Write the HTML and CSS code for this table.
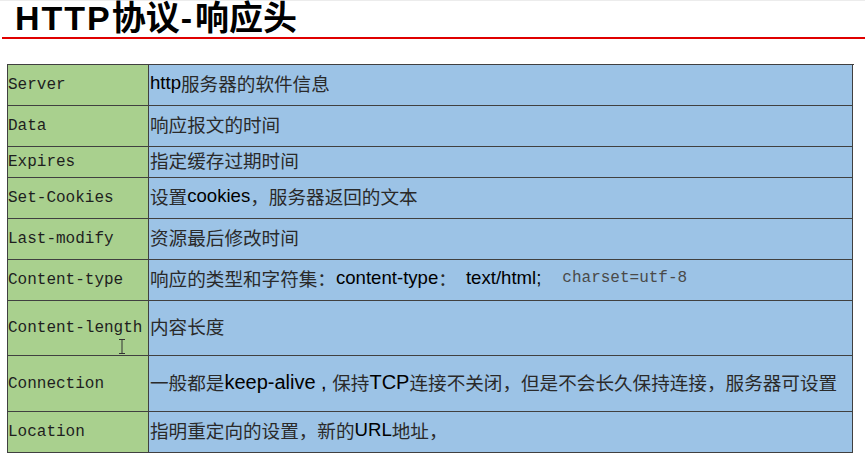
FILE: index.html
```html
<!DOCTYPE html>
<html lang="zh-CN">
<head>
<meta charset="utf-8">
<title>HTTP协议-响应头</title>
<link rel="stylesheet" href="styles.css">
</head>
<body>
<div class="slide">
  <header class="head">
    <h1 class="title"><span class="lat">HTTP</span>协议<span class="dash">-</span>响应头</h1>
  </header>
  <div class="table">
    <div class="k r41">Server</div>
    <div class="v r41"><span class="lat">http</span>服务器的软件信息</div>

    <div class="k r41">Data</div>
    <div class="v r41">响应报文的时间</div>

    <div class="k r31">Expires</div>
    <div class="v r31">指定缓存过期时间</div>

    <div class="k r41">Set-Cookies</div>
    <div class="v r41">设置<span class="lat">cookies</span>，服务器返回的文本</div>

    <div class="k r41">Last-modify</div>
    <div class="v r41">资源最后修改时间</div>

    <div class="k r41">Content-type</div>
    <div class="v r41">响应的类型和字符集：<span class="lat">content-type</span>：<span class="lat gap1">text/html;</span><span class="mono">charset=utf-8</span></div>

    <div class="k r55 cursor-cell">Content-length
      <svg class="ibeam" width="8" height="15" viewBox="0 0 8 15"><path d="M1 0.5h6M4 0.5v14M1 14.5h6" stroke="#333" stroke-width="1" fill="none"/></svg>
    </div>
    <div class="v r55">内容长度</div>

    <div class="k r56">Connection</div>
    <div class="v r56">一般都是<span class="lat big">keep-alive&nbsp;,&nbsp;</span>保持<span class="lat big">TCP</span>连接不关闭，但是不会长久保持连接，服务器可设置</div>

    <div class="k r41">Location</div>
    <div class="v r41">指明重定向的设置，新的<span class="lat">URL</span>地址，</div>
  </div>
</div>
</body>
</html>
```
FILE: styles.css
```css
html, body {
  margin: 0;
  padding: 0;
  background: #ffffff;
}
.slide {
  width: 865px;
  height: 460px;
  border-top: 1px solid #ececec;
  box-sizing: border-box;
}
.head {
  margin-left: 2px;
  height: 36px;
  border-bottom: 2px solid #e00000;
  display: flex;
  align-items: flex-end;
}
.title {
  margin: 0;
  padding-left: 13px;
  padding-bottom: 1px;
  font-family: "Noto Sans CJK SC", sans-serif;
  font-weight: 700;
  font-size: 34px;
  line-height: 35px;
  color: #000;
  white-space: nowrap;
}
.title .lat {
  font-family: "Liberation Sans", Arial, sans-serif;
  letter-spacing: 2px;
}
.title .dash {
  font-family: "Liberation Sans", Arial, sans-serif;
  margin: 0 3px 0 1px;
}
.table {
  margin-top: 25px;
  margin-left: 7px;
  width: 846px;
  display: grid;
  grid-template-columns: 141px 704px;
  border-top: 1px solid #404040;
  border-left: 1px solid #404040;
}
.k, .v {
  box-sizing: border-box;
  border-right: 1px solid #404040;
  border-bottom: 1px solid #404040;
  display: flex;
  align-items: center;
  white-space: nowrap;
}
.k {
  background: #a9d08e;
  font-family: "Liberation Mono", "Courier New", monospace;
  font-size: 16px;
  color: #1e1e1e;
}
.v {
  background: #9cc3e6;
  font-family: "Noto Sans CJK SC", sans-serif;
  font-size: 18.6px;
  line-height: 22px;
  color: #2a2a2a;
  padding-left: 1px;
  padding-bottom: 4px;
}
.v .lat {
  font-family: "Liberation Sans", Arial, sans-serif;
  color: #000;
}
.v .big {
  font-size: 20px;
}
.v .gap1 {
  margin-left: 9px;
}
.v .mono {
  font-family: "Liberation Mono", "Courier New", monospace;
  font-size: 16px;
  color: #4a4a4a;
  margin-left: 21px;
}
.r31 { height: 31px; }
.r41 { height: 41px; }
.r55 { height: 55px; }
.r56 { height: 56px; }
.cursor-cell {
  position: relative;
}
.ibeam {
  position: absolute;
  left: 110px;
  top: 38px;
}
```
